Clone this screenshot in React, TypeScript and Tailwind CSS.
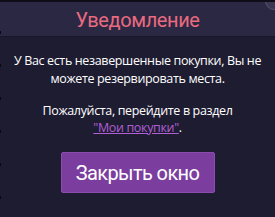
export default function App() {
  return (
    <div
      className="relative w-[275px] h-[217px] overflow-hidden bg-[#1e1c31] border-t-2 border-[#0e0d18]"
      style={{ fontFamily: '"Open Sans", "Liberation Sans", sans-serif' }}
    >
      <div className="h-[35px] bg-[#2a2843] border-b border-[#1a1828] flex items-center justify-center">
        <h2 className="font-[Roboto,sans-serif] text-[20px] text-[#ea6a80] tracking-[-0.4px] pt-[1px]">
          Уведомление
        </h2>
      </div>
      <div className="absolute -right-[8px] -top-[10px] w-[18px] h-[18px] rounded-full bg-[#3a3852] border border-[#55536c]" />
      <div className="absolute left-0 top-[29px] w-[1px] h-[190px] bg-[repeating-linear-gradient(to_bottom,#08080f_0_3px,transparent_3px_33px)]" />
      <div className="px-2 pt-[15px] text-center text-white text-[12.5px] tracking-[-0.35px]">
        <p className="leading-[18px]">У Вас есть незавершенные покупки, Вы не можете резервировать места.</p>
        <p className="mt-[14px] leading-[17px]">
          Пожалуйста, перейдите в раздел
          <br />
          <a href="#" className="text-[#b15fd6] underline">"Мои покупки"</a>.
        </p>
      </div>
      <div className="flex justify-center mt-[16px]">
        <button className="w-[154px] h-[41px] rounded-[2px] bg-[#7b3e9f] border border-[#8a4cae] text-white font-[Roboto,sans-serif] text-[20px] tracking-[-0.6px]">
          Закрыть окно
        </button>
      </div>
    </div>
  );
}
